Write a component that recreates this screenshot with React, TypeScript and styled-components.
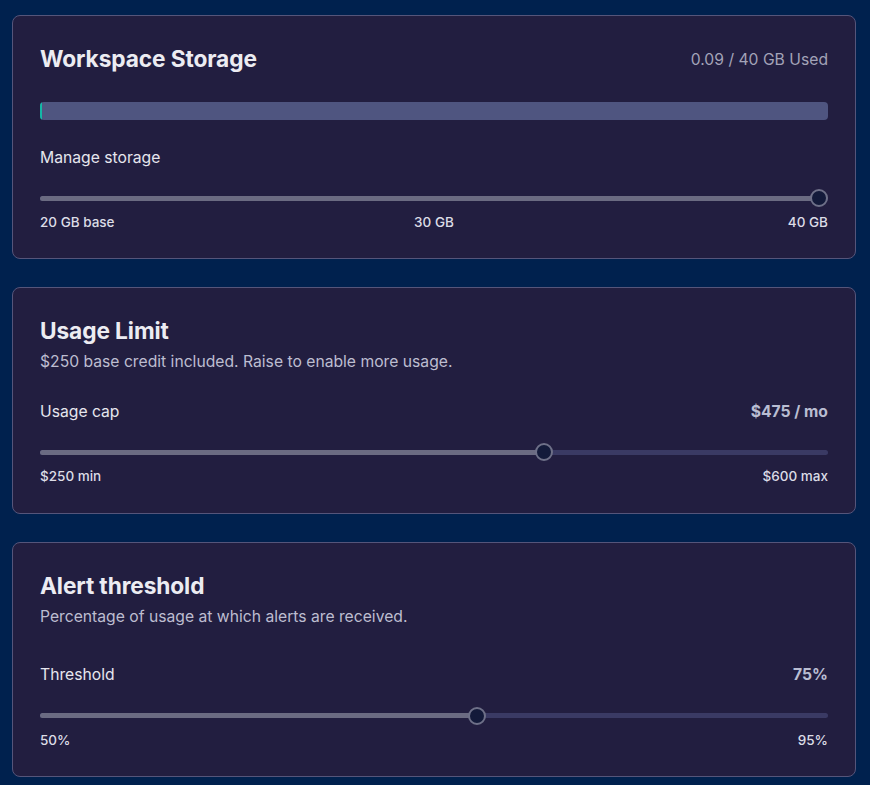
import React from "react";
import styled, { createGlobalStyle } from "styled-components";

const GlobalStyle = createGlobalStyle`
  html, body {
    margin: 0;
    padding: 0;
    background: #00214e;
  }
  body {
    font-family: Inter, "Noto Sans", sans-serif;
    -webkit-font-smoothing: antialiased;
  }
`;

const Page = styled.main`
  display: flex;
  flex-direction: column;
  gap: 28px;
  padding: 15px 14px 40px 12px;
`;

const Card = styled.section`
  background: #221e40;
  border: 1px solid #55557a;
  border-radius: 8px;
  padding: 28px 27px 27.4px 27px;
  display: flex;
  flex-direction: column;
`;

const Header = styled.div`
  display: flex;
  justify-content: space-between;
  align-items: center;
  height: 30px;
`;

const Title = styled.h2`
  margin: 0;
  font-size: 22.7px;
  line-height: 30px;
  font-weight: 700;
  color: #ececf2;
  letter-spacing: -0.1px;
`;

const UsedText = styled.span`
  font-size: 15.7px;
  color: #a3a3b8;
`;

const Subtitle = styled.p`
  margin: 4px 0 0 0;
  font-size: 15.7px;
  line-height: 24px;
  color: #bdbdd0;
`;

const StorageBar = styled.div`
  margin-top: 28px;
  height: 18px;
  border-radius: 4px;
  background: #4f5580;
  overflow: hidden;
`;

const StorageFill = styled.div`
  height: 100%;
  min-width: 2px;
  background: #14b8a6;
`;

const Row = styled.div<{ $top: number }>`
  margin-top: ${(p) => p.$top}px;
  display: flex;
  justify-content: space-between;
  align-items: center;
  height: 24px;
`;

const RowLabel = styled.span`
  font-size: 15.7px;
  color: #e6e6ee;
`;

const RowValue = styled.span`
  font-size: 15.7px;
  font-weight: 700;
  color: #b9bdd2;
`;

const SliderWrap = styled.div`
  position: relative;
  margin-top: 19px;
  height: 20px;
  display: flex;
  align-items: center;
`;

const Track = styled.div`
  width: 100%;
  height: 5px;
  border-radius: 3px;
  background: #3a3a64;
  overflow: hidden;
`;

const TrackFill = styled.div`
  height: 100%;
  background: #6b6b82;
`;

const Thumb = styled.div`
  position: absolute;
  top: 1px;
  width: 18px;
  height: 18px;
  box-sizing: border-box;
  border-radius: 50%;
  background: #131a3a;
  border: 2px solid #6e7088;
  transform: translateX(-50%);
`;

const Ticks = styled.div<{ $cols: number }>`
  margin-top: 5px;
  display: grid;
  grid-template-columns: repeat(${(p) => p.$cols}, 1fr);
  font-size: 13.5px;
  line-height: 18px;
  font-weight: 500;
  color: #dcdce6;

  & > span:first-child {
    justify-self: start;
  }
  & > span:last-child {
    justify-self: end;
  }
`;

const MidTick = styled.span`
  justify-self: center;
`;

const THUMB = 18;

function Slider({ pct }: { pct: number }) {
  const center = `calc(${THUMB / 2}px + (100% - ${THUMB}px) * ${pct})`;
  return (
    <SliderWrap>
      <Track>
        <TrackFill style={{ width: center }} />
      </Track>
      <Thumb style={{ left: center }} />
    </SliderWrap>
  );
}

export default function App() {
  return (
    <>
      <GlobalStyle />
      <Page>
        <Card>
          <Header>
            <Title>Workspace Storage</Title>
            <UsedText>0.09 / 40 GB Used</UsedText>
          </Header>
          <StorageBar>
            <StorageFill style={{ width: `${(0.09 / 40) * 100}%` }} />
          </StorageBar>
          <Row $top={25}>
            <RowLabel>Manage storage</RowLabel>
          </Row>
          <Slider pct={1} />
          <Ticks $cols={3}>
            <span>20 GB base</span>
            <MidTick>30 GB</MidTick>
            <span>40 GB</span>
          </Ticks>
        </Card>

        <Card>
          <Title>Usage Limit</Title>
          <Subtitle>$250 base credit included. Raise to enable more usage.</Subtitle>
          <Row $top={25}>
            <RowLabel>Usage cap</RowLabel>
            <RowValue>$475 / mo</RowValue>
          </Row>
          <Slider pct={(475 - 250) / (600 - 250)} />
          <Ticks $cols={2}>
            <span>$250 min</span>
            <span>$600 max</span>
          </Ticks>
        </Card>

        <Card>
          <Title>Alert threshold</Title>
          <Subtitle>Percentage of usage at which alerts are received.</Subtitle>
          <Row $top={34}>
            <RowLabel>Threshold</RowLabel>
            <RowValue>75%</RowValue>
          </Row>
          <Slider pct={(75 - 50) / (95 - 50)} />
          <Ticks $cols={2}>
            <span>50%</span>
            <span>95%</span>
          </Ticks>
        </Card>
      </Page>
    </>
  );
}
